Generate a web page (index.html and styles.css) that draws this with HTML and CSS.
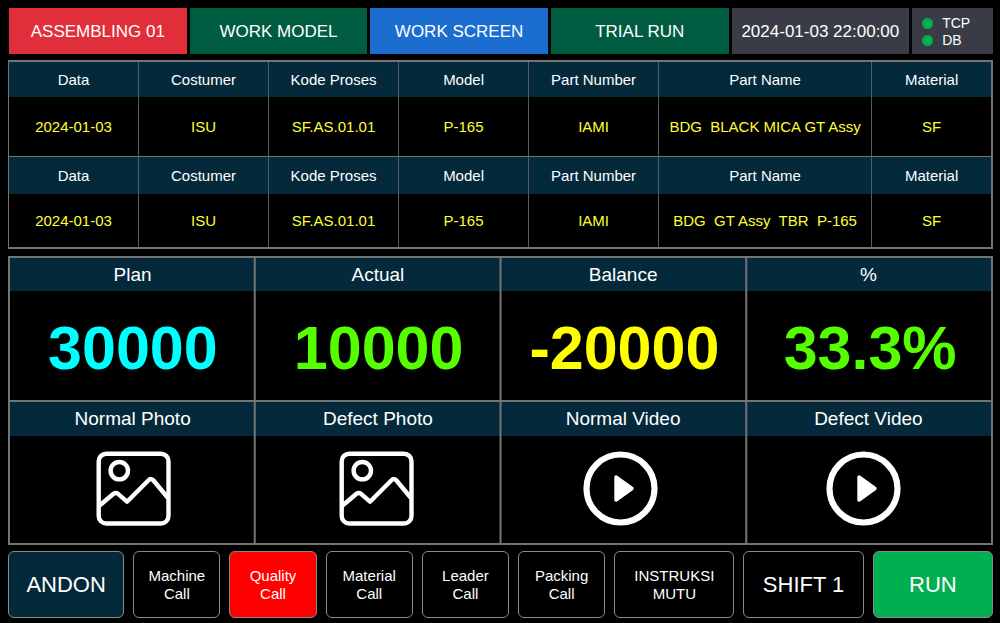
FILE: index.html
```html
<!DOCTYPE html>
<html lang="en">
<head>
<meta charset="utf-8">
<meta name="viewport" content="width=device-width, initial-scale=1">
<title>Work Screen</title>
<link rel="stylesheet" href="styles.css">
</head>
<body>
<svg class="sprite" aria-hidden="true">
  <symbol id="photo" viewBox="0 0 75 75">
    <g fill="none" stroke="#fff" stroke-width="4.4" stroke-linejoin="round">
      <rect x="2.7" y="2.7" width="69.8" height="69.8" rx="7.5"/>
      <circle cx="23.3" cy="19.7" r="8.7"/>
      <path d="M3 55 17.5 42.8Q19.8 41 22 42.8L31 50.7 52.5 29.2Q55 26.800 57.500 29.500L72 47"/>
    </g>
  </symbol>
  <symbol id="play" viewBox="0 0 75 75">
    <circle cx="37.500" cy="37.500" r="34" fill="none" stroke="#fff" stroke-width="6.2"/>
    <path d="M33 26 49 37.500 33 49Z" fill="#fff" stroke="#fff" stroke-width="3.400" stroke-linejoin="round"/>
  </symbol>
</svg>

<nav class="topbar">
  <button class="tab station">ASSEMBLING 01</button>
  <button class="tab">WORK MODEL</button>
  <button class="tab current">WORK SCREEN</button>
  <button class="tab">TRIAL RUN</button>
  <time class="tab clock" datetime="2024-01-03T22:00:00">2024-01-03 22:00:00</time>
  <ul class="links">
    <li>TCP</li>
    <li>DB</li>
  </ul>
</nav>

<main class="main">
  <table class="orders">
    <colgroup><col span="5" class="col-std"><col class="col-name"><col class="col-material"></colgroup>
    <tbody class="first">
      <tr><th>Data</th><th>Costumer</th><th>Kode Proses</th><th>Model</th><th>Part Number</th><th>Part Name</th><th>Material</th></tr>
      <tr><td>2024-01-03</td><td>ISU</td><td>SF.AS.01.01</td><td>P-165</td><td>IAMI</td><td>BDG  BLACK MICA GT Assy</td><td>SF</td></tr>
    </tbody>
    <tbody class="second">
      <tr><th>Data</th><th>Costumer</th><th>Kode Proses</th><th>Model</th><th>Part Number</th><th>Part Name</th><th>Material</th></tr>
      <tr><td>2024-01-03</td><td>ISU</td><td>SF.AS.01.01</td><td>P-165</td><td>IAMI</td><td>BDG  GT Assy  TBR  P-165</td><td>SF</td></tr>
    </tbody>
  </table>

  <section class="panel">
    <div class="row titles"><span>Plan</span><span>Actual</span><span>Balance</span><span>%</span></div>
    <div class="row values">
      <output class="plan">30000</output>
      <output class="actual">10000</output>
      <output class="balance">-20000</output>
      <output class="actual">33.3%</output>
    </div>
    <div class="row titles media-titles"><span>Normal Photo</span><span>Defect Photo</span><span>Normal Video</span><span>Defect Video</span></div>
    <div class="row media">
      <button class="open" aria-label="Normal Photo"><svg class="icon"><use href="#photo"/></svg></button>
      <button class="open" aria-label="Defect Photo"><svg class="icon"><use href="#photo"/></svg></button>
      <button class="open" aria-label="Normal Video"><svg class="icon"><use href="#play"/></svg></button>
      <button class="open" aria-label="Defect Video"><svg class="icon"><use href="#play"/></svg></button>
    </div>
  </section>
</main>

<footer class="actions">
  <button class="action large andon">ANDON</button>
  <button class="action">Machine<br>Call</button>
  <button class="action active">Quality<br>Call</button>
  <button class="action">Material<br>Call</button>
  <button class="action">Leader<br>Call</button>
  <button class="action">Packing<br>Call</button>
  <button class="action">INSTRUKSI<br>MUTU</button>
  <button class="action large">SHIFT 1</button>
  <button class="action large run">RUN</button>
</footer>
</body>
</html>
```
FILE: styles.css
```css
:root {
  --navy: #04293a;
  --rule: #747474;
  --thin-rule: #565d60;
  --green: #00b050;
}

* { box-sizing: border-box; }

body {
  margin: 0;
  min-height: 100vh;
  padding: 8px 7px 5px 8px;
  display: flex;
  flex-direction: column;
  gap: 6px;
  background: #000;
  color: #fff;
  font-family: "Liberation Sans", Arial, sans-serif;
  font-size: 15px;
}

button {
  border: 0;
  color: inherit;
  font: inherit;
  cursor: pointer;
}

.sprite { display: none; }

.topbar {
  display: grid;
  grid-template-columns: repeat(5, 178fr) 81fr;
  gap: 3px;
  min-height: 46px;
  padding-left: 1px;
}

.tab {
  display: flex;
  align-items: center;
  justify-content: center;
  padding: 2px 0 0;
  background: #005c40;
  font-size: 17px;
}
.station { background: #e02f3a; }
.current { background: #1c6dd0; }
.clock, .links { background: #393c47; }

.links {
  display: flex;
  flex-direction: column;
  justify-content: center;
  margin: 0;
  padding: 2px 10px 0;
  list-style: none;
  font-size: 14px;
  line-height: 17px;
}
.links li {
  display: flex;
  align-items: center;
  gap: 9px;
}
.links li::before {
  content: "";
  width: 11px;
  height: 11px;
  border-radius: 50%;
  background: var(--green);
}

.main {
  flex: 1;
  display: flex;
  flex-direction: column;
  gap: 7px;
}

.orders {
  width: 100%;
  table-layout: fixed;
  border-spacing: 0;
  border: 2px solid var(--rule);
  border-left-width: 1px;
}
.col-std { width: 13.240%; }
.col-name { width: 21.700%; }
.orders th, .orders td {
  padding: 0;
  border-right: 1px solid var(--thin-rule);
  text-align: center;
  white-space: pre;
}
.orders th:last-child, .orders td:last-child { border-right: 0; }
.orders th {
  height: 35px;
  background: var(--navy);
  font-weight: 400;
}
.orders td {
  height: 59px;
  color: #ffff32;
}
.second th {
  height: 38px;
  border-top: 1px solid var(--rule);
}
.second td { height: 53px; }

.panel {
  flex: 1;
  display: flex;
  flex-direction: column;
  border: 2px solid var(--rule);
  border-right: 0;
}
.row {
  display: grid;
  grid-template-columns: repeat(4, 1fr);
  align-items: center;
  justify-items: center;
  background: linear-gradient(to left, var(--rule) 2px, transparent 2px) 0 0 / 25% 100%;
}
.titles {
  min-height: 33px;
  padding-right: 2px;
  background-color: var(--navy);
  font-size: 19px;
}
.media-titles {
  min-height: 36px;
  border-top: 2px solid var(--rule);
}
.values {
  flex: 1 1 0px;
  padding-top: 4px;
  font-size: 61px;
  font-weight: 700;
}
.plan { color: #0ff; }
.actual { color: #5f0; }
.balance { color: #ff0; }

.media {
  flex: 1 1 0px;
  padding: 0 8px 2px 2px;
}
.open {
  display: flex;
  padding: 0;
  background: none;
}
.icon {
  width: 75px;
  height: 75px;
}

.actions {
  display: grid;
  grid-template-columns: 116fr repeat(5, 87fr) repeat(3, 120fr);
  gap: 9px;
  min-height: 67px;
}
.action {
  padding: 0;
  border: 1px solid #8a8a8a;
  border-radius: 6px;
  background: #000;
  line-height: 18px;
}
.large { font-size: 22px; }
.andon { background: var(--navy); }
.active { background: #f00; }
.run { background: var(--green); }
```
